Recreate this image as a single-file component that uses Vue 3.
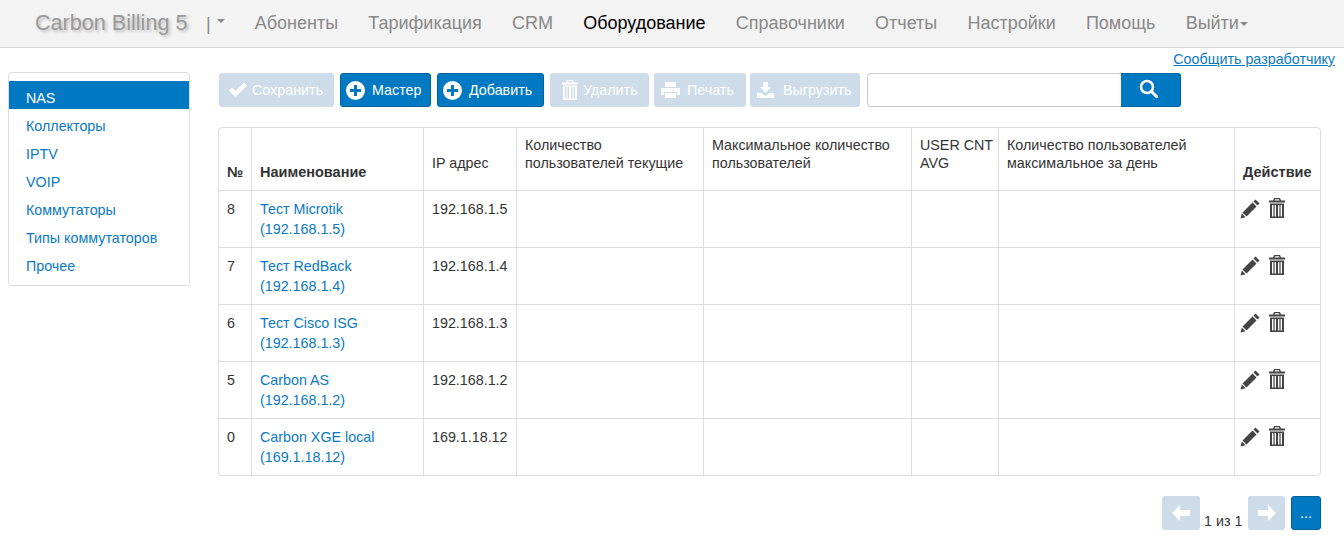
<script setup>
const navItems = ['Абоненты', 'Тарификация', 'CRM', 'Оборудование', 'Справочники', 'Отчеты', 'Настройки', 'Помощь']
const side = ['NAS', 'Коллекторы', 'IPTV', 'VOIP', 'Коммутаторы', 'Типы коммутаторов', 'Прочее']
const rows = [
  { n: 8, name: 'Тест Microtik', ip: '192.168.1.5' },
  { n: 7, name: 'Тест RedBack', ip: '192.168.1.4' },
  { n: 6, name: 'Тест Cisco ISG', ip: '192.168.1.3' },
  { n: 5, name: 'Carbon AS', ip: '192.168.1.2' },
  { n: 0, name: 'Carbon XGE local', ip: '169.1.18.12' },
]
const trash = 'M5 0h6l1 2.500h4v2H0v-2h4zM6 1.200L5.500 2.500h5L10 1.200zM1 5.500h14V20H1zM3 7v11.500h1.400V7zM5.600 7v11.500H7V7zM9 7v11.500h1.400V7zM11.600 7v11.500H13V7z'
</script>

<template>
  <div class="page">
    <header class="navbar">
      <span class="brand">Carbon Billing 5</span>
      <span class="sep">|</span><span class="caret small"></span>
      <nav class="nav">
        <a v-for="n in navItems" :key="n" :class="{ on: n === 'Оборудование' }">{{ n }}</a>
        <a>Выйти<span class="caret"></span></a>
      </nav>
    </header>

    <div class="report"><a>Сообщить разработчику</a></div>

    <div class="body">
      <aside class="side">
        <a v-for="s in side" :key="s" :class="{ active: s === 'NAS' }">{{ s }}</a>
      </aside>

      <main class="main">
        <div class="toolbar">
          <button class="btn off w-save">
            <svg class="ic" width="20" height="18" viewBox="0 0 20 18"><path d="M1 9.500l3-3 3.500 3.500L16 1.500l3 3L7.500 16z" fill="#fff"/></svg>
            <span>Сохранить</span>
          </button>
          <button class="btn pri w-master">
            <svg class="ic" width="19" height="19" viewBox="0 0 19 19"><path fill-rule="evenodd" d="M9.500 0a9.500 9.500 0 1 0 0 19 9.500 9.500 0 0 0 0-19zM8 4h3v4h4v3h-4v4H8v-4H4V8h4z" fill="#fff"/></svg>
            <span>Мастер</span>
          </button>
          <button class="btn pri w-add">
            <svg class="ic" width="19" height="19" viewBox="0 0 19 19"><path fill-rule="evenodd" d="M9.500 0a9.500 9.500 0 1 0 0 19 9.500 9.500 0 0 0 0-19zM8 4h3v4h4v3h-4v4H8v-4H4V8h4z" fill="#fff"/></svg>
            <span>Добавить</span>
          </button>
          <button class="btn off w-del">
            <svg class="ic" width="16" height="20" viewBox="0 0 16 20"><path :d="trash" fill="#fff" fill-rule="evenodd"/></svg>
            <span>Удалить</span>
          </button>
          <button class="btn off w-print">
            <svg class="ic" width="19" height="18" viewBox="0 0 19 18"><path fill-rule="evenodd" d="M4 1h11v5H4zM0 7h19v7h-3v-3H3v3H0zM4 12h11v5H4z" fill="#fff"/></svg>
            <span>Печать</span>
          </button>
          <button class="btn off w-exp">
            <svg class="ic" width="19" height="18" viewBox="0 0 19 18"><path d="M7 1h5v5h3l-5.500 6L4 6h3zM1 12h4.500l4 3 4-3H18v5H1z" fill="#fff"/></svg>
            <span>Выгрузить</span>
          </button>
          <div class="search">
            <input type="text" />
            <button class="go">
              <svg width="19" height="19" viewBox="0 0 19 19"><circle cx="8" cy="8" r="6" fill="none" stroke="#fff" stroke-width="2.600"/><path d="M12.500 12.500L17.500 17.500" stroke="#fff" stroke-width="3" stroke-linecap="round"/></svg>
            </button>
          </div>
        </div>

        <div class="tablebox">
          <table>
            <colgroup>
              <col style="width:32px" /><col style="width:172px" /><col style="width:93px" /><col style="width:187px" />
              <col style="width:208px" /><col style="width:87px" /><col style="width:236px" /><col />
            </colgroup>
            <thead>
              <tr>
                <th class="b">№</th>
                <th class="b">Наименование</th>
                <th class="top ip">IP адрес</th>
                <th class="top">Количество пользователей текущие</th>
                <th class="top">Максимальное количество пользователей</th>
                <th class="top">USER&nbsp;CNT AVG</th>
                <th class="top">Количество пользователей максимальное за день</th>
                <th class="b">Действие</th>
              </tr>
            </thead>
            <tbody>
              <tr v-for="r in rows" :key="r.n">
                <td>{{ r.n }}</td>
                <td><a>{{ r.name }}<br />({{ r.ip }})</a></td>
                <td>{{ r.ip }}</td>
                <td></td><td></td><td></td><td></td>
                <td class="acts">
                  <svg width="21" height="21" viewBox="0 0 21 21"><path d="M15.500 1.500l4 4-2 2-4-4zM12.500 4.500l4 4L6.500 18.500l-4-4zM1.800 15.500l3.700 3.700L.5 20.500z" fill="#444"/></svg>
                  <svg class="bin" width="16" height="20" viewBox="0 0 16 20"><path :d="trash" fill="#444" fill-rule="evenodd"/></svg>
                </td>
              </tr>
            </tbody>
          </table>
        </div>

        <div class="pager">
          <button class="btn off pg-l">
            <svg width="18" height="16" viewBox="0 0 18 16"><path d="M8 0v5h10v6H8v5L0 8z" fill="#fff"/></svg>
          </button>
          <span class="count">1 из 1</span>
          <button class="btn off pg-r">
            <svg width="18" height="16" viewBox="0 0 18 16"><path d="M10 0v5H0v6h10v5l8-8z" fill="#fff"/></svg>
          </button>
          <button class="btn pri pg-m">...</button>
        </div>
      </main>
    </div>
  </div>
</template>

<style>
html, body { margin: 0; background: #fff; }
</style>

<style scoped>
.page {
  width: 1344px;
  height: 554px;
  overflow: hidden;
  font: 14.300px/20px "Liberation Sans", Arial, sans-serif;
  color: #333;
  box-sizing: border-box;
}
.navbar {
  height: 47px;
  box-sizing: content-box;
  border-top: 1px solid #1a1a22;
  border-bottom: 1px solid #d5d5d5;
  background: #f3f3f3;
  display: flex;
  align-items: center;
  margin-top: -1px;
}
.brand {
  margin-left: 35px;
  font-size: 21.600px;
  color: #999;
  text-shadow: 2px 2px 3px #bbb;
  width: 171px;
  white-space: nowrap;
  margin-top: -2px;
}
.sep { font-size: 18px; color: #888; }
.caret {
  display: inline-block;
  border-top: 4px solid #888;
  border-left: 4px solid transparent;
  border-right: 4px solid transparent;
  vertical-align: middle;
  margin-left: 1px;
}
.caret.small { margin-left: 6px; margin-bottom: 6px; }
.nav {
  display: flex;
  margin-left: 30px;
  gap: 30.200px;
  font-size: 18px;
  color: #888;
  margin-top: -2px;
}
.nav .on { color: #000; }
.report {
  text-align: right;
  padding-right: 9px;
  height: 24px;
  line-height: 23px;
}
.report a, td a { color: #0a79c4; }
.report a { text-decoration: underline; }
.body { display: flex; align-items: flex-start; }
.side {
  margin-left: 8px;
  width: 180px;
  border: 1px solid #ddd;
  border-radius: 4px;
  padding: 8px 0;
  display: flex;
  flex-direction: column;
}
.side a {
  height: 28px;
  line-height: 34px;
  padding-left: 17px;
  color: #0a79c4;
}
.side a.active { background: #0079c2; color: #fff; }
.main { margin-left: 28px; width: 1103px; }
.toolbar { display: flex; margin-left: 1px; margin-top: 1px; height: 34px; }
.btn {
  box-sizing: border-box;
  height: 34px;
  border: 1px solid transparent;
  border-radius: 3px;
  padding: 0;
  font: 14.300px/20px "Liberation Sans", Arial, sans-serif;
  display: flex;
  align-items: center;
  color: #fff;
}
.btn.off { background: #cddce8; }
.btn.pri { background: #0079c2; border-color: #00609c; }
.btn span { white-space: nowrap; }
.ic { flex: none; }
.w-save { width: 115px; padding-left: 8px; margin-right: 6px; }
.w-save .ic { margin-right: 4px; }
.w-master { width: 91px; padding-left: 5px; margin-right: 6px; }
.w-master .ic { margin-right: 7px; }
.w-add { width: 107px; padding-left: 5px; margin-right: 6px; }
.w-add .ic { margin-right: 7px; }
.w-del { width: 99px; padding-left: 11px; margin-right: 5px; }
.w-del .ic { margin-right: 5px; }
.w-print { width: 92px; padding-left: 6px; margin-right: 4px; }
.w-print .ic { margin-right: 7px; }
.w-exp { width: 110px; padding-left: 5px; margin-right: 7px; }
.w-exp .ic { margin-right: 8px; }
.search { display: flex; }
.search input {
  box-sizing: border-box;
  width: 254px;
  height: 34px;
  border: 1px solid #ccc;
  border-right: 0;
  border-radius: 4px 0 0 4px;
  outline: 0;
  padding: 0;
  background: #fff;
}
.go {
  width: 60px;
  height: 34px;
  box-sizing: border-box;
  background: #0079c2;
  border: 1px solid #00609c;
  border-left: 0;
  border-radius: 0 3px 3px 0;
  padding: 0 4px 4px 0;
  display: flex;
  align-items: center;
  justify-content: center;
}
.tablebox {
  margin-top: 20px;
  width: 1103px;
  box-sizing: border-box;
  border: 1px solid #ddd;
  border-radius: 4px;
}
table {
  width: 100%;
  table-layout: fixed;
  border-collapse: collapse;
}
th, td {
  border-left: 1px solid #ddd;
  border-bottom: 1px solid #ddd;
  padding: 8px 4px 8px 8.500px;
  text-align: left;
  vertical-align: top;
}
th:first-child, td:first-child { border-left: 0; padding-left: 8px; }
tbody tr:last-child td { border-bottom: 0; }
th { font-weight: normal; vertical-align: bottom; height: 62px; box-sizing: border-box; }
th.b { font-weight: bold; font-size: 14.500px; }
th.top { vertical-align: top; line-height: 18px; }
th.ip { padding-top: 26px; }
tbody td { height: 40px; box-sizing: content-box; }
td.acts { padding: 7px 4px 0 5px; }
.acts svg { display: inline-block; vertical-align: top; }
.acts .bin { margin-left: 8px; }
.pager {
  display: flex;
  margin-top: 20px;
  margin-left: 944px;
  align-items: flex-end;
}
.pg-l { width: 38px; justify-content: center; }
.pg-r { width: 37px; justify-content: center; margin-left: 6px; }
.pg-m { width: 30px; justify-content: center; margin-left: 6px; }
.count { margin-left: 4px; width: 38px; white-space: nowrap; line-height: 20px; margin-bottom: -1px; }
</style>
